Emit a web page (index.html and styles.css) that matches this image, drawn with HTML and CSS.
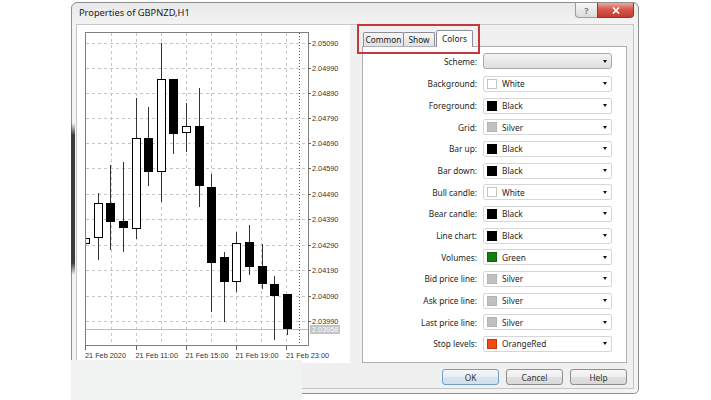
FILE: index.html
```html
<!DOCTYPE html>
<html>
<head>
<meta charset="utf-8">
<title>Properties of GBPNZD,H1</title>
<link rel="stylesheet" href="styles.css">
</head>
<body>
<div class="window">
  <div class="titlebar">
    <span class="title">Properties of GBPNZD,H1</span>
    <div class="caption-btns">
      <div class="cbtn help">?</div>
      <div class="cbtn close"><svg width="8" height="7" viewBox="0 0 8 7"><path d="M1 0.5 L7 6.5 M7 0.5 L1 6.5" stroke="#fff" stroke-width="1.6" fill="none"/></svg></div>
    </div>
  </div>
  <div class="client">
    <div class="main">
      <div class="chart-panel">
        <svg class="chart" width="273" height="338" viewBox="77 25 273 338">
          <defs><clipPath id="plot"><rect x="86" y="33" width="222" height="312"/></clipPath></defs>
          <g stroke="#c6c6c6" stroke-width="1" stroke-dasharray="3 3">
            <line x1="111.5" y1="33" x2="111.5" y2="345"/>
            <line x1="136.5" y1="33" x2="136.5" y2="345"/>
            <line x1="161.5" y1="33" x2="161.5" y2="345"/>
            <line x1="186.5" y1="33" x2="186.5" y2="345"/>
            <line x1="211.5" y1="33" x2="211.5" y2="345"/>
            <line x1="236.5" y1="33" x2="236.5" y2="345"/>
            <line x1="261.5" y1="33" x2="261.5" y2="345"/>
            <line x1="286.5" y1="33" x2="286.5" y2="345"/>
            <line x1="86" y1="43.5" x2="308" y2="43.5"/>
            <line x1="86" y1="68.5" x2="308" y2="68.5"/>
            <line x1="86" y1="93.5" x2="308" y2="93.5"/>
            <line x1="86" y1="118.5" x2="308" y2="118.5"/>
            <line x1="86" y1="143.5" x2="308" y2="143.5"/>
            <line x1="86" y1="168.5" x2="308" y2="168.5"/>
            <line x1="86" y1="194.5" x2="308" y2="194.5"/>
            <line x1="86" y1="219.5" x2="308" y2="219.5"/>
            <line x1="86" y1="245.5" x2="308" y2="245.5"/>
            <line x1="86" y1="270.5" x2="308" y2="270.5"/>
            <line x1="86" y1="296.5" x2="308" y2="296.5"/>
            <line x1="86" y1="321.5" x2="308" y2="321.5"/>
          </g>
          <line x1="299.5" y1="33" x2="299.5" y2="345" stroke="#555" stroke-dasharray="1 2"/>
          <line x1="86" y1="329.5" x2="308" y2="329.5" stroke="#bdbdbd"/>
          <g clip-path="url(#plot)">
            <g stroke="#333" stroke-width="1">
              <line x1="85.5" y1="235" x2="85.5" y2="247"/>
              <line x1="98.5" y1="193" x2="98.5" y2="260"/>
              <line x1="110.5" y1="165" x2="110.5" y2="250"/>
              <line x1="123.5" y1="162" x2="123.5" y2="252"/>
              <line x1="136.5" y1="98" x2="136.5" y2="239"/>
              <line x1="148.5" y1="107" x2="148.5" y2="186"/>
              <line x1="161.5" y1="43" x2="161.5" y2="202"/>
              <line x1="173.5" y1="79" x2="173.5" y2="154"/>
              <line x1="186.5" y1="103" x2="186.5" y2="152"/>
              <line x1="199.5" y1="88" x2="199.5" y2="207"/>
              <line x1="211.5" y1="174" x2="211.5" y2="312"/>
              <line x1="224.5" y1="252" x2="224.5" y2="322"/>
              <line x1="236.5" y1="232" x2="236.5" y2="292"/>
              <line x1="249.5" y1="225" x2="249.5" y2="275"/>
              <line x1="262.5" y1="244" x2="262.5" y2="289"/>
              <line x1="274.5" y1="276" x2="274.5" y2="340"/>
              <line x1="287.5" y1="294" x2="287.5" y2="335"/>
            </g>
            <g fill="#fff" stroke="#000" stroke-width="1">
              <rect x="81.5" y="238.5" width="8" height="5"/>
              <rect x="94.5" y="203.5" width="8" height="34"/>
              <rect x="132.5" y="138.5" width="8" height="90"/>
              <rect x="157.5" y="79.5" width="8" height="92"/>
              <rect x="182.5" y="126.5" width="8" height="6"/>
              <rect x="232.5" y="243.5" width="8" height="38"/>
            </g>
            <g fill="#000">
              <rect x="106" y="203" width="9" height="19"/>
              <rect x="119" y="221" width="9" height="7"/>
              <rect x="144" y="138" width="9" height="34"/>
              <rect x="169" y="79" width="9" height="55"/>
              <rect x="195" y="126" width="9" height="60"/>
              <rect x="207" y="187" width="9" height="76"/>
              <rect x="220" y="257" width="9" height="25"/>
              <rect x="245" y="242" width="9" height="25"/>
              <rect x="258" y="266" width="9" height="18"/>
              <rect x="270" y="284" width="9" height="12"/>
              <rect x="283" y="294" width="9" height="35"/>
            </g>
          </g>
          <rect x="85.5" y="32.5" width="223" height="313" fill="none" stroke="#808080"/>
          <g stroke="#666">
            <line x1="308" y1="43.5" x2="311" y2="43.5"/>
            <line x1="308" y1="68.5" x2="311" y2="68.5"/>
            <line x1="308" y1="93.5" x2="311" y2="93.5"/>
            <line x1="308" y1="118.5" x2="311" y2="118.5"/>
            <line x1="308" y1="143.5" x2="311" y2="143.5"/>
            <line x1="308" y1="168.5" x2="311" y2="168.5"/>
            <line x1="308" y1="194.5" x2="311" y2="194.5"/>
            <line x1="308" y1="219.5" x2="311" y2="219.5"/>
            <line x1="308" y1="245.5" x2="311" y2="245.5"/>
            <line x1="308" y1="270.5" x2="311" y2="270.5"/>
            <line x1="308" y1="296.5" x2="311" y2="296.5"/>
            <line x1="308" y1="321.5" x2="311" y2="321.5"/>
            <line x1="85.5" y1="345" x2="85.5" y2="350"/>
            <line x1="136.5" y1="345" x2="136.5" y2="350"/>
            <line x1="186.5" y1="345" x2="186.5" y2="350"/>
            <line x1="236.5" y1="345" x2="236.5" y2="350"/>
            <line x1="286.5" y1="345" x2="286.5" y2="350"/>
          </g>
          <g class="axis-text" fill="#333">
            <text x="312" y="46.2">2.05090</text>
            <text x="312" y="71.2">2.04990</text>
            <text x="312" y="96.2">2.04890</text>
            <text x="312" y="121.2">2.04790</text>
            <text x="312" y="146.2">2.04690</text>
            <text x="312" y="171.2">2.04590</text>
            <text x="312" y="197.2">2.04490</text>
            <text x="312" y="222.2">2.04390</text>
            <text x="312" y="248.2">2.04290</text>
            <text x="312" y="273.2">2.04190</text>
            <text x="312" y="299.2">2.04090</text>
            <text x="312" y="324.2">2.03990</text>
            <text x="85" y="357.5">21 Feb 2020</text>
            <text x="135.5" y="357.5">21 Feb 11:00</text>
            <text x="185.5" y="357.5">21 Feb 15:00</text>
            <text x="235.5" y="357.5">21 Feb 19:00</text>
            <text x="286" y="357.5">21 Feb 23:00</text>
          </g>
          <rect x="310" y="325" width="30" height="9" fill="#c4c4c4"/>
          <text class="axis-text" x="312" y="332.3" fill="#fff">2.03958</text>
        </svg>
      </div>
      <div class="tabs-area">
        <div class="tabstrip">
          <div class="tab tab-common">Common</div>
          <div class="tab tab-show">Show</div>
          <div class="tab tab-colors active">Colors</div>
        </div>
        <div class="pane">
          <div class="form">
            <div class="lbl scheme-lbl">Scheme:</div>
            <div class="combo scheme"><span class="arrow"></span></div>

            <div class="lbl">Background:</div>
            <div class="combo"><span class="swatch sw-white"></span><span class="val">White</span><span class="arrow"></span></div>

            <div class="lbl">Foreground:</div>
            <div class="combo"><span class="swatch sw-black"></span><span class="val">Black</span><span class="arrow"></span></div>

            <div class="lbl">Grid:</div>
            <div class="combo"><span class="swatch sw-silver"></span><span class="val">Silver</span><span class="arrow"></span></div>

            <div class="lbl">Bar up:</div>
            <div class="combo"><span class="swatch sw-black"></span><span class="val">Black</span><span class="arrow"></span></div>

            <div class="lbl">Bar down:</div>
            <div class="combo"><span class="swatch sw-black"></span><span class="val">Black</span><span class="arrow"></span></div>

            <div class="lbl">Bull candle:</div>
            <div class="combo"><span class="swatch sw-white"></span><span class="val">White</span><span class="arrow"></span></div>

            <div class="lbl">Bear candle:</div>
            <div class="combo"><span class="swatch sw-black"></span><span class="val">Black</span><span class="arrow"></span></div>

            <div class="lbl">Line chart:</div>
            <div class="combo"><span class="swatch sw-black"></span><span class="val">Black</span><span class="arrow"></span></div>

            <div class="lbl">Volumes:</div>
            <div class="combo"><span class="swatch sw-green"></span><span class="val">Green</span><span class="arrow"></span></div>

            <div class="lbl">Bid price line:</div>
            <div class="combo"><span class="swatch sw-silver"></span><span class="val">Silver</span><span class="arrow"></span></div>

            <div class="lbl">Ask price line:</div>
            <div class="combo"><span class="swatch sw-silver"></span><span class="val">Silver</span><span class="arrow"></span></div>

            <div class="lbl">Last price line:</div>
            <div class="combo"><span class="swatch sw-silver"></span><span class="val">Silver</span><span class="arrow"></span></div>

            <div class="lbl">Stop levels:</div>
            <div class="combo"><span class="swatch sw-orangered"></span><span class="val">OrangeRed</span><span class="arrow"></span></div>
          </div>
        </div>
      </div>
    </div>
    <div class="buttons">
      <div class="btn default">OK</div>
      <div class="btn">Cancel</div>
      <div class="btn">Help</div>
    </div>
  </div>
</div>
<div class="hl-box"></div>
<div class="edge-shadow"></div>
<div class="cover"></div>
</body>
</html>
```

FILE: styles.css
```css
* { box-sizing: border-box; }
html, body { margin: 0; padding: 0; }
body {
  width: 711px;
  height: 400px;
  overflow: hidden;
  position: relative;
  background: #fff;
  font-family: "Noto Sans", "Liberation Sans", sans-serif;
  font-size: 8.3px;
  color: #222;
}

.window {
  margin: 2px 0 0 71px;
  width: 568px;
  height: 392px;
  border: 1px solid #8e8e8e;
  border-radius: 6px 6px 5px 5px;
  background: linear-gradient(#e9e9e9, #f4f4f4 22px, #f3f3f3);
  display: flex;
  flex-direction: column;
}

.titlebar {
  height: 21px;
  flex: none;
  display: flex;
  align-items: flex-start;
  padding-left: 7px;
}
.title {
  font-size: 9.3px;
  line-height: 20px;
  color: #1a1a1a;
}
.caption-btns {
  margin-left: auto;
  margin-right: 4px;
  display: flex;
}
.cbtn {
  height: 15px;
  display: flex;
  align-items: center;
  justify-content: center;
}
.help {
  width: 22px;
  border: 1px solid #9c9c9c;
  border-top: 0;
  border-right: 0;
  border-radius: 0 0 0 4px;
  background: linear-gradient(#f8f8f8, #dadada);
  color: #7c7c7c;
  font-weight: bold;
  font-size: 9px;
  line-height: 1;
}
.close {
  width: 37px;
  border: 1px solid #8a3a33;
  border-top: 0;
  border-radius: 0 0 4px 0;
  background: linear-gradient(#eaa89e, #d4594c 45%, #c5392d);
}

.client {
  flex: 1;
  margin: 0 4px 4px 4px;
  border: 1px solid #c6c6c6;
  background: #f0f0f0;
  display: flex;
  flex-direction: column;
}
.main {
  display: flex;
  height: 338px;
  flex: none;
}
.chart-panel {
  width: 273px;
  flex: none;
  background: #fff;
}
.chart { display: block; }
.axis-text {
  font-family: "Liberation Sans", Arial, sans-serif;
  font-size: 7.3px;
}

.tabs-area {
  margin-left: 12px;
  width: 265px;
  display: flex;
  flex-direction: column;
}
.tabstrip {
  height: 21px;
  flex: none;
  display: flex;
  align-items: flex-end;
  padding-left: 1px;
}
.tab {
  height: 14px;
  border: 1px solid #8c8f96;
  border-bottom: 0;
  border-radius: 2px 2px 0 0;
  background: linear-gradient(#f6f6f6, #e1e1e1);
  display: flex;
  align-items: center;
  justify-content: center;
  color: #222;
}
.tab-common { width: 41px; }
.tab-show { width: 32px; margin-left: -1px; }
.tab-colors { width: 37px; margin-left: 1px; }
.tab.active {
  height: 17px;
  margin-bottom: -1px;
  background: #fff;
  position: relative;
  z-index: 1;
  padding-bottom: 2px;
}
.pane {
  height: 317px;
  border: 1px solid #aeb2b8;
  background: #fff;
  padding-top: 6px;
}
.form {
  display: grid;
  grid-template-columns: 114px 129px;
  column-gap: 6px;
  row-gap: 5.67px;
  align-items: center;
}
.lbl {
  text-align: right;
  white-space: nowrap;
  color: #262626;
}
.combo {
  height: 16px;
  border: 1px solid #d6d6d6;
  border-radius: 2px;
  background: #fff;
  display: flex;
  align-items: center;
  padding-left: 3px;
  color: #262626;
}
.combo.scheme {
  background: linear-gradient(#f5f5f5, #dfdfdf);
  border-color: #a9a9a9;
  border-radius: 3px;
  margin-bottom: 1.3px;
}
.swatch {
  width: 10px;
  height: 10px;
  flex: none;
  border: 1px solid rgba(0, 0, 0, 0.2);
}
.sw-white { background: #fff; border-color: #c4c4c4; }
.sw-black { background: #000; }
.sw-silver { background: #c0c0c0; border-color: #b4b4b4; }
.sw-green { background: #118011; }
.sw-orangered { background: #f24a10; }
.val { margin-left: 5px; }
.arrow {
  margin-left: auto;
  margin-right: 4px;
  width: 0;
  height: 0;
  border-left: 2.5px solid transparent;
  border-right: 2.5px solid transparent;
  border-top: 3px solid #111;
}

.buttons {
  display: flex;
  justify-content: flex-end;
  gap: 7px;
  margin-top: 6px;
  padding-right: 6px;
}
.btn {
  width: 57px;
  height: 16px;
  border: 1px solid #8e8e8e;
  border-radius: 3px;
  background: linear-gradient(#f6f6f6, #eeeeee 50%, #e2e2e2 50%, #d8d8d8);
  display: flex;
  align-items: center;
  justify-content: center;
  color: #333;
}
.btn.default {
  border-color: #6f9fc8;
  background: linear-gradient(#f2f7fb, #e6eef5 50%, #d9e5ef 50%, #d0dfeb);
}

.hl-box {
  position: absolute;
  left: 357px;
  top: 24px;
  width: 123px;
  height: 30px;
  border: 2px solid #c4373c;
}
.edge-shadow {
  position: absolute;
  left: 71px;
  top: 123px;
  width: 4px;
  height: 152px;
  background: linear-gradient(to bottom, rgba(58, 58, 58, 0), #3c3c3c 8%, #3c3c3c 92%, rgba(58, 58, 58, 0));
}
.cover {
  position: absolute;
  left: 71px;
  top: 360px;
  width: 231px;
  height: 40px;
  background: #f1f2f2;
}
```
